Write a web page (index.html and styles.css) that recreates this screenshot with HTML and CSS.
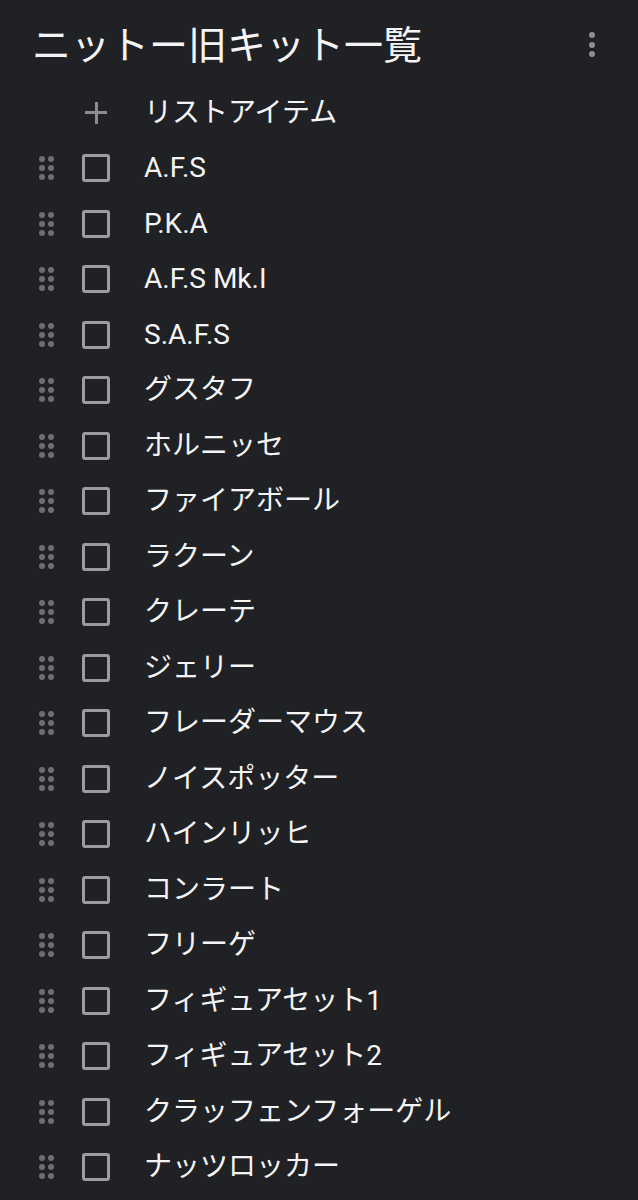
FILE: index.html
```html
<!DOCTYPE html>
<html lang="ja">
<head>
<meta charset="utf-8">
<link rel="stylesheet" href="styles.css">
</head>
<body>
<div class="page">
  <header class="header">
    <h1 class="title">ニットー旧キット一覧</h1>
    <div class="menu"><span></span><span></span><span></span></div>
  </header>
  <ul class="list">
    <li class="row add-row">
      <span class="handle-space"></span>
      <span class="plus"></span>
      <span class="label">リストアイテム</span>
    </li>
    <li class="row"><span class="handle"><i></i><i></i><i></i><i></i><i></i><i></i></span><span class="box"></span><span class="label">A.F.S</span></li>
    <li class="row"><span class="handle"><i></i><i></i><i></i><i></i><i></i><i></i></span><span class="box"></span><span class="label">P.K.A</span></li>
    <li class="row"><span class="handle"><i></i><i></i><i></i><i></i><i></i><i></i></span><span class="box"></span><span class="label">A.F.S Mk.I</span></li>
    <li class="row"><span class="handle"><i></i><i></i><i></i><i></i><i></i><i></i></span><span class="box"></span><span class="label">S.A.F.S</span></li>
    <li class="row"><span class="handle"><i></i><i></i><i></i><i></i><i></i><i></i></span><span class="box"></span><span class="label">グスタフ</span></li>
    <li class="row"><span class="handle"><i></i><i></i><i></i><i></i><i></i><i></i></span><span class="box"></span><span class="label">ホルニッセ</span></li>
    <li class="row"><span class="handle"><i></i><i></i><i></i><i></i><i></i><i></i></span><span class="box"></span><span class="label">ファイアボール</span></li>
    <li class="row"><span class="handle"><i></i><i></i><i></i><i></i><i></i><i></i></span><span class="box"></span><span class="label">ラクーン</span></li>
    <li class="row"><span class="handle"><i></i><i></i><i></i><i></i><i></i><i></i></span><span class="box"></span><span class="label">クレーテ</span></li>
    <li class="row"><span class="handle"><i></i><i></i><i></i><i></i><i></i><i></i></span><span class="box"></span><span class="label">ジェリー</span></li>
    <li class="row"><span class="handle"><i></i><i></i><i></i><i></i><i></i><i></i></span><span class="box"></span><span class="label">フレーダーマウス</span></li>
    <li class="row"><span class="handle"><i></i><i></i><i></i><i></i><i></i><i></i></span><span class="box"></span><span class="label">ノイスポッター</span></li>
    <li class="row"><span class="handle"><i></i><i></i><i></i><i></i><i></i><i></i></span><span class="box"></span><span class="label">ハインリッヒ</span></li>
    <li class="row"><span class="handle"><i></i><i></i><i></i><i></i><i></i><i></i></span><span class="box"></span><span class="label">コンラート</span></li>
    <li class="row"><span class="handle"><i></i><i></i><i></i><i></i><i></i><i></i></span><span class="box"></span><span class="label">フリーゲ</span></li>
    <li class="row"><span class="handle"><i></i><i></i><i></i><i></i><i></i><i></i></span><span class="box"></span><span class="label">フィギュアセット1</span></li>
    <li class="row"><span class="handle"><i></i><i></i><i></i><i></i><i></i><i></i></span><span class="box"></span><span class="label">フィギュアセット2</span></li>
    <li class="row"><span class="handle"><i></i><i></i><i></i><i></i><i></i><i></i></span><span class="box"></span><span class="label">クラッフェンフォーゲル</span></li>
    <li class="row"><span class="handle"><i></i><i></i><i></i><i></i><i></i><i></i></span><span class="box"></span><span class="label">ナッツロッカー</span></li>
  </ul>
</div>
</body>
</html>
```
FILE: styles.css
```css
html, body {
  margin: 0;
  padding: 0;
  background: #202124;
}
.page {
  width: 638px;
  height: 1200px;
  overflow: hidden;
  background: #202124;
  color: #f1f1f1;
  font-family: Roboto, "Noto Sans CJK JP", sans-serif;
}
.header {
  height: 85px;
  display: flex;
  align-items: flex-start;
  justify-content: space-between;
  padding: 0 43px 0 32px;
  box-sizing: border-box;
}
.title {
  margin: 23px 0 0 0;
  font-family: "Noto Sans CJK JP", sans-serif;
  font-weight: 400;
  font-size: 39px;
  line-height: 1;
  color: #f4f4f4;
}
.menu {
  display: flex;
  flex-direction: column;
  gap: 3.5px;
  align-items: center;
  margin-top: 32px;
}
.menu span {
  width: 6px;
  height: 6px;
  border-radius: 50%;
  background: #8e8e8e;
}
.list {
  list-style: none;
  margin: 0;
  padding: 0;
}
.row {
  height: 55.5px;
  display: flex;
  align-items: center;
  padding-left: 39px;
}
.handle, .handle-space {
  width: 15px;
  height: 24px;
  display: grid;
  grid-template-columns: 6px 6px;
  grid-auto-rows: 6px;
  column-gap: 3px;
  row-gap: 3px;
  align-content: center;
  flex: none;
}
.handle i {
  display: block;
  width: 6px;
  height: 6px;
  border-radius: 50%;
  background: #6e6e70;
}
.box {
  flex: none;
  width: 28px;
  height: 28px;
  box-sizing: border-box;
  border: 3px solid #9c9c9e;
  border-radius: 3px;
  margin-left: 28px;
}
.plus {
  flex: none;
  width: 22px;
  height: 22px;
  margin-left: 31px;
  margin-right: 3px;
  position: relative;
}
.plus::before, .plus::after {
  content: "";
  position: absolute;
  background: #8c8c8e;
}
.plus::before {
  left: 0;
  top: 9.5px;
  width: 22px;
  height: 3px;
}
.plus::after {
  top: 0;
  left: 9.5px;
  width: 3px;
  height: 22px;
}
.label {
  margin-left: 34px;
  font-size: 28px;
  line-height: 1;
  color: #f4f4f4;
  white-space: nowrap;
}
```
